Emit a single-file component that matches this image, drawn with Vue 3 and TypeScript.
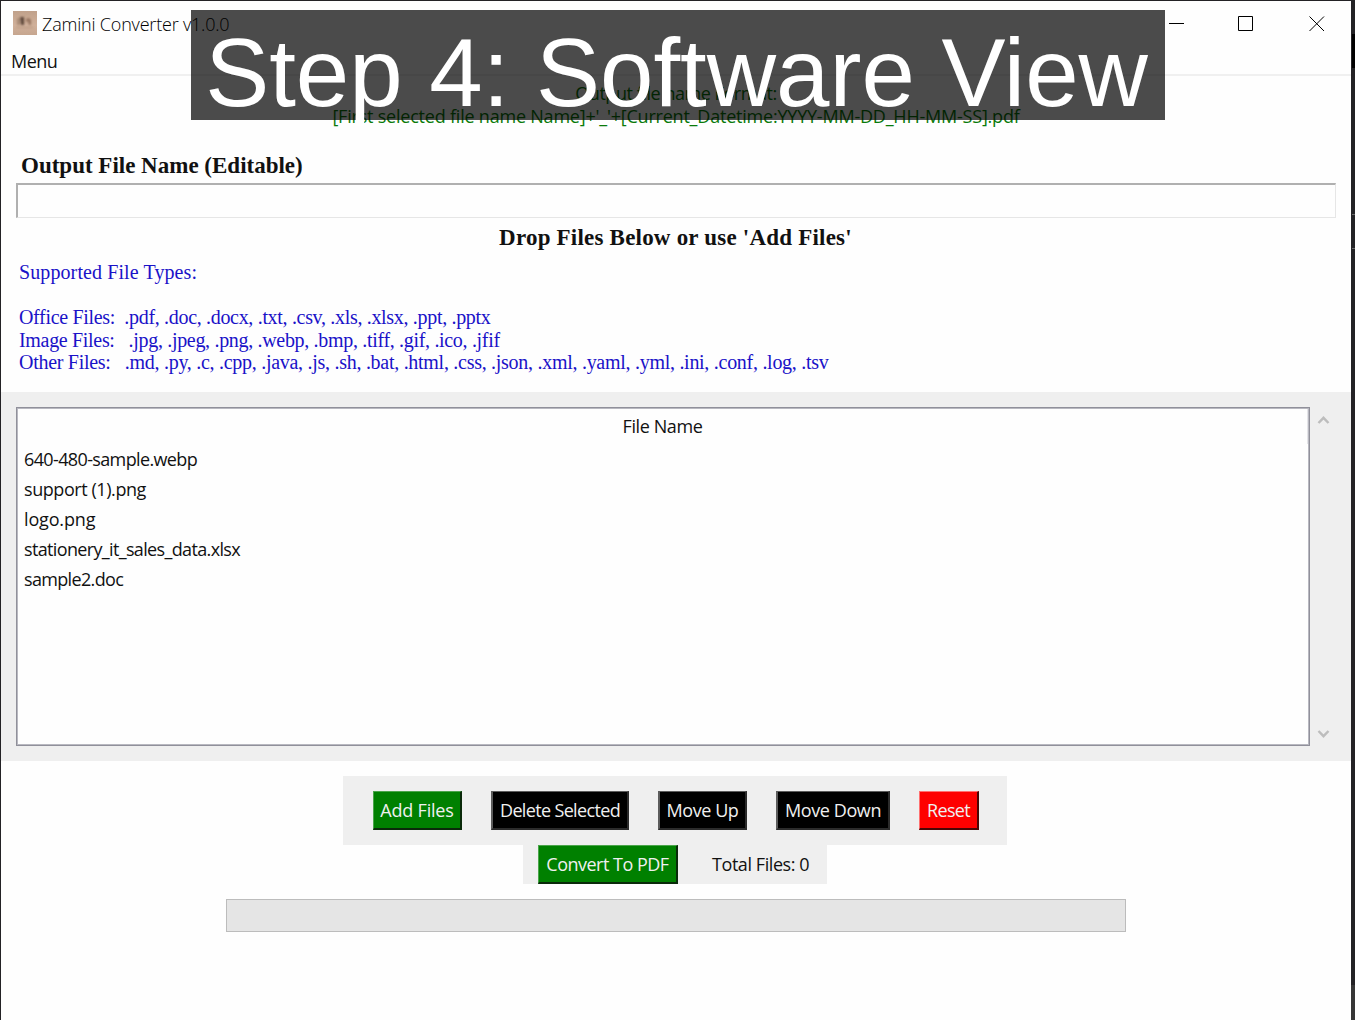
<script setup lang="ts">
interface Item {
  id: string
  text: string
}

interface Action extends Item {
  tone: 'green' | 'black' | 'red'
}

const supported: Item[] = [
  { id: 'types', text: 'Supported File Types:' },
  { id: 'blank', text: ' ' },
  { id: 'office', text: 'Office Files:  .pdf, .doc, .docx, .txt, .csv, .xls, .xlsx, .ppt, .pptx' },
  { id: 'image', text: 'Image Files:   .jpg, .jpeg, .png, .webp, .bmp, .tiff, .gif, .ico, .jfif' },
  {
    id: 'other',
    text: 'Other Files:   .md, .py, .c, .cpp, .java, .js, .sh, .bat, .html, .css, .json, .xml, .yaml, .yml, .ini, .conf, .log, .tsv',
  },
]

const files: Item[] = [
  { id: 'webp', text: '640-480-sample.webp' },
  { id: 'support', text: 'support (1).png' },
  { id: 'logo', text: 'logo.png' },
  { id: 'sales', text: 'stationery_it_sales_data.xlsx' },
  { id: 'doc', text: 'sample2.doc' },
]

const actions: Action[] = [
  { id: 'add', text: 'Add Files', tone: 'green' },
  { id: 'delete', text: 'Delete Selected', tone: 'black' },
  { id: 'up', text: 'Move Up', tone: 'black' },
  { id: 'down', text: 'Move Down', tone: 'black' },
  { id: 'reset', text: 'Reset', tone: 'red' },
]
</script>

<template>
  <div class="desktop">
    <div class="window">
      <header class="titlebar">
        <svg class="app-icon" width="24" height="24" viewBox="0 0 24 24">
          <defs>
            <linearGradient id="paper" x1="0" y1="0" x2="0" y2="1">
              <stop offset="0" stop-color="#c0a18b" />
              <stop offset="0.6" stop-color="#d0b09a" />
              <stop offset="1" stop-color="#c6a68f" />
            </linearGradient>
            <filter id="soft"><feGaussianBlur stdDeviation="0.8" /></filter>
          </defs>
          <rect width="24" height="24" fill="url(#paper)" />
          <g filter="url(#soft)">
            <path d="M4 7h3v7H4z" fill="#a98b76" />
            <path d="M7 6h4v8H8z" fill="#5d463a" />
            <path d="M13 8l3-1 2 2v5h-2l-1-4-2 1z" fill="#94735e" />
            <path d="M3 16h17v1H3z" fill="#b69680" />
          </g>
        </svg>
        <span class="title">Zamini Converter v1.0.0</span>
        <div class="controls">
          <svg width="16" height="16" viewBox="0 0 16 16"><path d="M0 7.5h15" /></svg>
          <svg width="16" height="16" viewBox="0 0 16 16"><path d="M.5 .5h14v14H.5z" /></svg>
          <svg width="16" height="16" viewBox="0 0 16 16"><path d="M.5 .5l14.5 14.5M15 .5L.5 15" /></svg>
        </div>
      </header>

      <nav class="menubar"><span>Menu</span></nav>

      <div class="format">
        <p class="format-head">Output file name Format:</p>
        <p class="format-body">[First selected file name Name]+'_'+[Current_Datetime:YYYY-MM-DD_HH-MM-SS].pdf</p>
      </div>

      <label class="name-label" for="output-name">Output File Name (Editable)</label>
      <input id="output-name" class="name-input" type="text" />

      <h2 class="drop">Drop Files Below or use 'Add Files'</h2>
      <div class="supported">
        <p v-for="line in supported" :key="line.id" :class="line.id">{{ line.text }}</p>
      </div>

      <section class="files">
        <div class="tree">
          <div class="tree-head"><span>File Name</span></div>
          <div v-for="f in files" :key="f.id" class="row" :class="'row-' + f.id">{{ f.text }}</div>
        </div>
        <div class="scroll">
          <svg width="13" height="10" viewBox="0 0 13 10"><path d="M1.5 8l5-5.2 5 5.2" /></svg>
          <svg width="13" height="10" viewBox="0 0 13 10"><path d="M1.5 2l5 5.2 5-5.2" /></svg>
        </div>
      </section>

      <div class="actions">
        <button v-for="a in actions" :key="a.id" class="btn" :class="[a.tone, 'btn-' + a.id]">{{ a.text }}</button>
      </div>
      <div class="convert">
        <button class="btn green btn-convert">Convert To PDF</button>
        <span class="total">Total Files: 0</span>
      </div>
      <div class="progress"></div>
    </div>

    <aside class="edge"><i class="mark"></i><i class="rule first"></i><i class="rule"></i><i class="foot"></i></aside>
    <div class="caption">Step 4: Software View</div>
  </div>
</template>

<style>
body {
  overflow: hidden;
}
</style>

<style scoped>
.desktop {
  position: relative;
  box-sizing: border-box;
  display: flex;
  width: 1355px;
  height: 1020px;
  padding: 1px 0 0 1px;
  background: #232225;
  overflow: hidden;
  font: 18px/22px "Open Sans", "Noto Sans", sans-serif;
  color: #111;
}
.window {
  display: flex;
  flex-direction: column;
  width: 1350px;
  background: #fefefe;
}
p,
h2 {
  margin: 0;
}
.titlebar {
  display: flex;
  align-items: center;
  height: 46px;
  padding-left: 12px;
  color: #000;
}
.app-icon {
  margin-top: -2px;
}
.title {
  margin: 0 0 0 5px;
  font-weight: 300;
  letter-spacing: -0.2px;
}
.controls {
  display: flex;
  gap: 54px;
  margin: -1px 26px 0 auto;
}
.controls svg {
  fill: none;
  stroke: #000;
  stroke-width: 1;
}
.controls svg:nth-child(2) {
  margin: 0 1px 0 -1px;
}
.menubar {
  box-sizing: border-box;
  height: 29px;
  padding: 3px 0 0 10px;
  border-bottom: 2px solid #f0f0f0;
  letter-spacing: -0.5px;
}
.format {
  padding-top: 6px;
  text-align: center;
  line-height: 22.5px;
  color: #0a7a0a;
}
.format-head {
  letter-spacing: -0.45px;
}
.format-body {
  letter-spacing: -0.21px;
}
.name-label {
  margin: 26px 0 0 20px;
  font: bold 23px/26px "Liberation Serif", serif;
}
.name-input {
  box-sizing: border-box;
  width: 1320px;
  height: 35px;
  margin: 4px 0 0 15px;
  padding: 0 6px;
  border: 1px solid #e6e6e6;
  border-top: 2px solid #b0b0b0;
  border-left: 2px solid #b0b0b0;
  outline: none;
  background: #fefefe;
}
.drop {
  margin-top: 7px;
  padding-right: 1px;
  text-align: center;
  font: bold 23px/26px "Liberation Serif", serif;
  letter-spacing: 0.21px;
}
.supported {
  margin: 10px 0 0 18px;
  font: 20px/22.5px "Liberation Serif", serif;
  white-space: pre;
  color: #1a12c8;
}
.types {
  letter-spacing: 0.1px;
}
.office,
.image {
  letter-spacing: -0.32px;
}
.other {
  letter-spacing: -0.28px;
}
.files {
  display: flex;
  box-sizing: border-box;
  height: 369px;
  margin-top: 18.5px;
  padding: 15px;
  background: #efefef;
}
.tree {
  box-sizing: border-box;
  width: 1294px;
  border: 1px solid #90909a;
  box-shadow: inset 0 0 0 1px #b8b8c0;
  padding: 1px;
  background: #fefefe;
}
.tree-head {
  box-sizing: border-box;
  height: 35px;
  padding-top: 6px;
  border-right: 1px solid #e4e4e8;
  text-align: center;
  letter-spacing: -0.4px;
}
.row {
  height: 30px;
  padding-left: 6px;
  line-height: 30px;
}
.row-webp {
  letter-spacing: -0.63px;
}
.row-support {
  letter-spacing: -0.43px;
}
.row-logo {
  letter-spacing: -0.15px;
}
.row-sales {
  letter-spacing: -0.65px;
}
.row-doc {
  letter-spacing: -0.66px;
}
.scroll {
  display: flex;
  flex-direction: column;
  justify-content: space-between;
  padding: 8px 0 7px 7px;
}
.scroll svg {
  fill: none;
  stroke: #bdbdbd;
  stroke-width: 2.4;
}
.actions {
  box-sizing: border-box;
  display: flex;
  justify-content: space-between;
  width: 664px;
  height: 69px;
  margin: 15px 0 0 342px;
  padding: 15px 28px 15px 30px;
  background: #efefef;
}
.btn {
  box-sizing: border-box;
  height: 39px;
  padding: 0;
  border: 2px solid;
  border-radius: 0;
  font: inherit;
  line-height: 35px;
  white-space: nowrap;
  color: #f0f0f0;
}
.green {
  border-color: #4aa54a #0a2a0a #0a2a0a #4aa54a;
  border-width: 1px 2px 2px 1px;
  background: #008000;
}
.black {
  border-color: #5c5c5c #2b2b2b #2b2b2b #5c5c5c;
  border-width: 1px 2px 2px 2px;
  background: #000;
}
.red {
  border-color: #ff7070 #4a0505 #4a0505 #ff7070;
  border-width: 1px 2px 2px 1px;
  background: #fe0000;
}
.btn-add {
  width: 89px;
  letter-spacing: -0.2px;
}
.btn-delete {
  width: 138px;
  letter-spacing: -0.65px;
}
.btn-up {
  width: 89px;
  letter-spacing: -0.45px;
}
.btn-down {
  width: 114px;
  letter-spacing: -0.4px;
}
.btn-reset {
  width: 60px;
  letter-spacing: -0.7px;
}
.convert {
  display: flex;
  align-items: center;
  box-sizing: border-box;
  width: 304px;
  height: 39px;
  margin-left: 522px;
  padding-left: 15px;
  background: #efefef;
}
.btn-convert {
  width: 140px;
  letter-spacing: -0.5px;
}
.total {
  margin: -2px 0 0 34px;
  letter-spacing: -0.43px;
}
.progress {
  box-sizing: border-box;
  width: 900px;
  height: 33px;
  margin: 15px 0 0 225px;
  border: 1px solid #bcbcbc;
  background: #e5e5e5;
}
.edge {
  display: flex;
  flex-direction: column;
  width: 4px;
}
.mark {
  height: 34px;
  margin: 33px 0 0 1px;
  background: #000;
}
.rule {
  height: 1px;
  margin: 33px 0 0 1px;
  background: #6a6a6a;
}
.rule.first {
  margin-top: 146px;
}
.foot {
  height: 35px;
  margin-top: auto;
  background: #363636;
}
.caption {
  position: absolute;
  box-sizing: border-box;
  left: 191px;
  top: 10px;
  width: 974px;
  height: 110px;
  padding: 8px 3px 0 0;
  background: rgba(0, 0, 0, 0.706);
  font: 96px/110px "Liberation Sans", sans-serif;
  text-align: center;
  white-space: nowrap;
  color: #fff;
}
</style>
